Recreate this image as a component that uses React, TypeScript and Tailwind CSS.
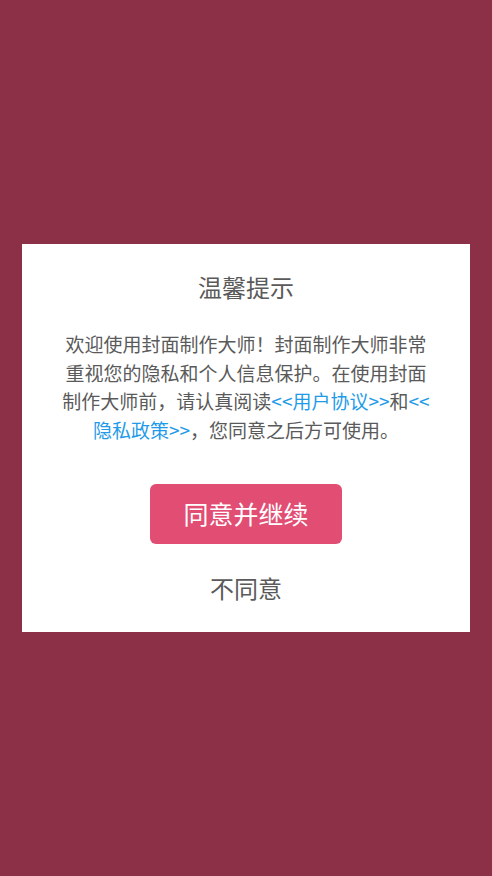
const lines = [
  <>欢迎使用封面制作大师！封面制作大师非常</>,
  <>重视您的隐私和个人信息保护。在使用封面</>,
  <>
    制作大师前，请认真阅读<span className="text-[#1f9be8]">&lt;&lt;用户协议&gt;&gt;</span>和
    <span className="text-[#1f9be8]">&lt;&lt;</span>
  </>,
  <>
    <span className="text-[#1f9be8]">隐私政策&gt;&gt;</span>，您同意之后方可使用。
  </>,
];

export default function App() {
  return (
    <div
      className="flex h-[876px] w-full items-center justify-center bg-[#8c3047]"
      style={{ fontFamily: '"Noto Sans CJK SC", "Noto Sans", sans-serif' }}
    >
      <div className="flex w-[448px] flex-col items-center bg-white px-[20px] pb-[27px] pt-[26px]">
        <h1 className="text-[24px] leading-[34px] text-[#5a5a5a]">温馨提示</h1>

        <div className="mt-[26px] flex flex-col items-center text-[19px] leading-[28.5px] text-[#5a5a5a]">
          {lines.map((line, i) => (
            <p key={i} className="whitespace-nowrap">
              {line}
            </p>
          ))}
        </div>

        <button className="mt-[40px] h-[60px] w-[192px] rounded-[6px] bg-[#e24d74] text-[25px] text-white">
          同意并继续
        </button>

        <button className="mt-[27px] text-[24px] leading-[34px] text-[#5a5a5a]">不同意</button>
      </div>
    </div>
  );
}
